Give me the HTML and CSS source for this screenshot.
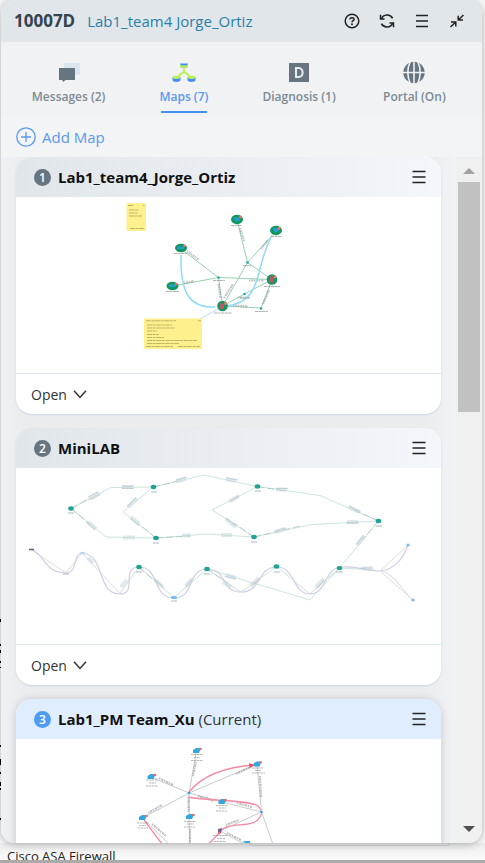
FILE: index.html
```html
<!DOCTYPE html>
<html lang="en">
<head>
<meta charset="utf-8">
<meta name="viewport" content="width=device-width, initial-scale=1">
<title>10007D - Maps</title>
<link rel="stylesheet" href="styles.css">
</head>
<body>
<svg class="backdrop" width="2" height="240" viewBox="0 0 2 240" aria-hidden="true">
  <path d="M0 9h1v3H0zM0 34h1v2H0zM0 40h1v3H0zM0 51h1v2H0zM0 57h1v1H0zM0 135h1v2H0zM0 149h1v6H0zM0 162h1v2H0zM0 172h1v4H0zM0 178h1v2H0zM0 208h1v2H0z"/>
</svg>
<main class="panel">
  <header class="topbar">
    <h1>10007D</h1>
    <a class="topic" href="#">Lab1_team4 Jorge_Ortiz</a>
    <div class="tools">
      <button type="button" aria-label="Help">
        <svg width="16" height="16" viewBox="0 0 16 16"><circle cx="8" cy="8" r="6.8" fill="none" stroke="#222" stroke-width="1.5"/><path d="M5.9 6.4C6 4.2 10 4.100 10.100 6.300C10.100 7.700 8 7.700 8 9.300" fill="none" stroke="#222" stroke-width="1.500"/><circle cx="8" cy="11.300" r="1" fill="#222"/></svg>
      </button>
      <button type="button" aria-label="Refresh">
        <svg width="16" height="16" viewBox="0 0 16 16" fill="none" stroke="#222" stroke-width="1.600"><path d="M2.300 6A6.200 6.200 0 0 1 13.600 5.300M13.700 10A6.200 6.200 0 0 1 2.400 10.700"/><path d="M1.500 1.800V6H5.500M14.500 14.200V10H10.500" stroke-width="1.500"/></svg>
      </button>
      <button type="button" aria-label="Menu">
        <svg width="16" height="16" viewBox="0 0 16 16" stroke="#222" stroke-width="1.500"><path d="M2 2.500h12M2 8h12M2 13.500h12"/></svg>
      </button>
      <button type="button" aria-label="Collapse">
        <svg width="16" height="16" viewBox="0 0 16 16" fill="none" stroke="#222" stroke-width="1.500"><path d="M14.500 2L9 7.200M9.200 2.800V7H14M1.500 14L7 8.800M2 9H6.800V13.500"/></svg>
      </button>
    </div>
  </header>

  <nav class="tabs">
    <a class="tab" href="#">
      <svg width="24" height="24" viewBox="0 0 24 24"><path d="M7 3h16v12H7z" fill="#dce6ef"/><path d="M2 8h16v12H8.500L6.500 22L5 20H2z" fill="#66757f"/></svg>
      <span>Messages (2)</span>
    </a>
    <a class="tab active" href="#" aria-current="page">
      <svg width="24" height="24" viewBox="0 0 24 24"><path d="M12 5v6.500L5.500 17M12 11.500L18.500 17" fill="none" stroke="#b8ef55" stroke-width="1.800"/><path d="M8 3.500h8V6c0 2.500-8 2.500-8 0zM.5 17h8v3c0 2.500-8 2.500-8 0zM15.500 17h8v3c0 2.500-8 2.500-8 0z" fill="#468ff0"/><path d="M8 4v2c0 2.500 8 2.500 8 0V4c-1 2-7 2-8 0z" fill="#b8ef55"/><ellipse cx="4.500" cy="17.300" rx="4" ry="1.600" fill="#b8ef55"/><ellipse cx="19.500" cy="17.300" rx="4" ry="1.600" fill="#b8ef55"/></svg>
      <span>Maps (7)</span>
    </a>
    <a class="tab" href="#">
      <svg width="24" height="24" viewBox="0 0 24 24"><path d="M2 3h20v19H2z" fill="#66757f"/><path d="M9 8v9h2.500c5.500 0 5.500-9 0-9z" fill="none" stroke="#e8edf0" stroke-width="2"/></svg>
      <span>Diagnosis (1)</span>
    </a>
    <a class="tab" href="#">
      <svg width="24" height="24" viewBox="0 0 24 24"><circle cx="12" cy="12.500" r="10.700" fill="#66757f"/><path d="M12 1.500v22M1 12.500h22M8.300 1.500C5 8 5 17 8.300 23.500M15.700 1.500C19 8 19 17 15.700 23.500" fill="none" stroke="#f1f3f5" stroke-width="1.600"/></svg>
      <span>Portal (On)</span>
    </a>
  </nav>

  <button type="button" class="add">
    <svg width="20" height="20" viewBox="0 0 20 20" fill="none" stroke="#5a98f0" stroke-width="1.300"><circle cx="10" cy="10" r="9.200"/><path d="M10 5v10M5 10h10"/></svg>
    Add Map
  </button>

  <div class="body">
    <div class="list">
      <article class="card">
        <header class="card-head">
          <span class="num">1</span>
          <h2>Lab1_team4_Jorge_Ortiz</h2>
          <button type="button" class="more" aria-label="Map menu"><svg width="14" height="14" viewBox="0 0 14 14" stroke="#222" stroke-width="1.500"><path d="M.5 1.500h13M.5 7h13M.5 12.500h13"/></svg></button>
        </header>
        <svg class="thumb" viewBox="16 197 425 176" role="img" aria-label="Network map">
          <g fill="#fdf08d"><path d="M126.500 203h19.500v28h-19.500zM144 318.500h58V349h-58z"/></g>
          <g fill="none" stroke="#6d6838" stroke-width=".8" stroke-dasharray="5 .5 3 .6" opacity=".55">
            <path d="M128 205.500h5M143 205.500h1.500M129 210h10M129 213h9M129 216h13M130 228.500h14" />
            <path d="M146 320.800h30M198 320.800h3M147 325h25M147 328h28M147 331h10M147 334.500h12M147 337.500h17M147 340.500h50M147 343.500h32M146 346.500h27M178 346.500h22"/>
          </g>
          <path d="M201 318.500L218 309" stroke="#bcdcf7" fill="none"/>
          <g fill="none" stroke="#98d1b2" stroke-width="1">
            <path d="M237 220L247.500 262.500L276 231M247.500 262.500L272 279.500M247.500 262.500L222.500 306M181 249L218.500 277.500L272 279.500M218.500 277.500L173 286M218.500 277.500L222.500 306L244.500 294L272 279.500M222.500 306L261 308L272 280"/>
          </g>
          <g fill="none" stroke="#858c88" stroke-width="2.200" stroke-dasharray="1.500 .8 2 .6" opacity=".5">
            <path d="M240 228l4 13M261 249l7-9M187 251l12 9M184 283l10-2M218.500 284l2 14M224 298l9-14M249 280.500h15M233 305.500l15 1M263 304l6-14M238 297.500h11"/>
          </g>
          <path d="M181 255C180 294 190 308 215 307M271 238C254 268 264 302 226 306" fill="none" stroke="#90daf8" stroke-width="1.500"/>
          <g fill="#2aa5a8"><circle cx="247.500" cy="262.500" r="1.300"/><circle cx="218.500" cy="277.500" r="1.300"/><circle cx="244.500" cy="294" r="1.300"/><circle cx="261" cy="308.500" r="1.300"/></g>
          <g fill="#12985c">
            <ellipse cx="237" cy="219.500" rx="6" ry="4.700"/><ellipse cx="276" cy="230.500" rx="6" ry="4.700"/><ellipse cx="181" cy="248" rx="6" ry="4.200"/><ellipse cx="172.500" cy="286" rx="6" ry="4.200"/><circle cx="272" cy="279.500" r="5.300"/><circle cx="222.500" cy="306" r="5.300"/>
          </g>
          <g fill="#269dd4"><path d="M233.500 217.500h6v3.500l-4 .5zM272.500 228h6l1 3-5 1.500zM177.500 246.500h6.500v2.500h-7zM169 284.500h6.500v2.500H169z"/></g>
          <g fill="#b9576a"><path d="M270 276l4 1-1 6-4-1zM220.500 303l4 1-1 5.500-4-1z"/></g>
          <g fill="#f0776e"><circle cx="240.500" cy="217" r="1.400"/><circle cx="279" cy="228.500" r="1.400"/><circle cx="184.500" cy="246" r="1.300"/><circle cx="176" cy="284" r="1.300"/><circle cx="275" cy="277" r="1.400"/><circle cx="225.500" cy="303.500" r="1.400"/></g>
          <path d="M231 225.500h11M271 236.500h11M174 253.500h13M166 291.500h13M264 286.500h16M214 313h18M243 265.500h8M213 280.500h12M240 298h10M255 311.500h13" stroke="#555" stroke-width="1" stroke-dasharray="3 .5" opacity=".45"/>
        </svg>
        <footer class="card-foot"><button type="button" class="open">Open <svg width="14" height="9" viewBox="0 0 14 9" fill="none" stroke="#333" stroke-width="1.500"><path d="M1 .8L7 7.500L13 .8"/></svg></button></footer>
      </article>

      <article class="card">
        <header class="card-head">
          <span class="num">2</span>
          <h2>MiniLAB</h2>
          <button type="button" class="more" aria-label="Map menu"><svg width="14" height="14" viewBox="0 0 14 14" stroke="#222" stroke-width="1.500"><path d="M.5 1.500h13M.5 7h13M.5 12.500h13"/></svg></button>
        </header>
        <svg class="thumb" viewBox="16 468 425 176" role="img" aria-label="Network map">
          <g fill="none" stroke="#cde5da" stroke-width="1">
            <path d="M71 508.500L111 487.500L153.500 487L204 475L257.500 486.500L320 495.500L378.500 521L312 524.500L254 537L206 534L156 538L106 537L71 508.500M153.500 487L123 512L156 538M257.500 486.500L212 510L254 537M378.500 521L339.500 568L310 600L207 569M120 593.500L139 567L174 597.500L207 569L241 592L276.500 566.500L310 594L339.500 568L374 570"/>
          </g>
          <g fill="none" stroke="#a3bdb2" stroke-width="1" stroke-dasharray="7 3" opacity=".7"><path d="M71 508.500L90 498M71 508.500L90 524M153.500 487L178 481M257.500 486.500L285 491M254 537L300 526M378.500 521L352 509M156 538L190 536M378.500 521L362 540M156 538L138 523M254 537L234 523M139 567L158 584M207 569L228 583"/></g>
          <g fill="none" stroke="#e1dce1"><path d="M31 549.500L66 573L82 553L120 593.500M380 571L408 545M380 571L413 600"/></g>
          <g fill="none" stroke="#d0cde6" stroke-width="1.200">
            <path d="M31 549C46 555 44 573 66 573C78 573 73 553 82 553C106 555 96 594 120 594C138 594 120 567 139 567C160 567 152 598 174 598C195 598 187 569 207 569C228 569 220 592 241 592C262 592 257 567 276.500 567C296 567 292 594 310 594C327 594 324 567 342 567C359 566 365 571 380 571C395 570 404 557 408 545"/>
            <path d="M380 571C396 574 401 590 413 600" stroke="#e6e2ec"/>
          </g>
          <g fill="none" stroke="#c9d9dd" stroke-width="4" opacity=".6">
            <path d="M90 498l9-5M122 487h11M176 481.500l10-3M88 522l8 7M128 507l9-9M131 517l8 7M123 537.500h12M226 479l10 2M230 501l9-5M226 519l10 8M182 535.500h9M221 535h11M276 489.500h11M349 507l10 5M276 532l9-3M347 522h11M357 545l7-9M88 558l5 5M121 587l6-7M155 580l8 7M186 586l6-7M226 575l10 3M223 582l8 5M251 585l8-7M316 587l8-8M362 568.500h11"/>
          </g>
          <g fill="none" stroke="#9eb6c0" stroke-width="1" opacity=".5">
            <path d="M88 497l10-5M90 500l10-5M122 486h12M122 488.500h12M176 480l11-3M86 522l9 8M127 507l9-9M131 519l8 7M226 478l12 2M229 502l10-6M226 518l10 8M276 488.500h12M349 506l12 6M274 531l12-3M346 523h13M356 545l8-10M155 579l9 9M185 588l8-10M224 576l12 3M251 587l9-9M316 589l8-9M360 568h12"/>
          </g>
          <g fill="#22a294"><ellipse cx="71" cy="508.500" rx="2.800" ry="2.200"/><ellipse cx="153.500" cy="487" rx="2.800" ry="2.200"/><ellipse cx="156" cy="538" rx="2.800" ry="2.200"/><ellipse cx="257.500" cy="486.500" rx="2.800" ry="2.200"/><ellipse cx="254" cy="537" rx="2.800" ry="2.200"/><ellipse cx="378.500" cy="521" rx="2.800" ry="2.200"/><ellipse cx="139" cy="567" rx="2.800" ry="2.200"/><ellipse cx="207" cy="569" rx="2.800" ry="2.200"/><ellipse cx="276.500" cy="566.500" rx="2.800" ry="2.200"/><ellipse cx="339.500" cy="568" rx="2.800" ry="2"/></g>
          <g fill="#7abcf0"><ellipse cx="174" cy="597.500" rx="3" ry="1.700"/><circle cx="408" cy="545" r="1.600"/><circle cx="413" cy="600" r="1.600"/></g>
          <ellipse cx="82.500" cy="553" rx="2.500" ry="1.200" fill="#b5d9f5"/>
          <path d="M29 549.500h5" stroke="#5c6089" stroke-width="1.500"/>
          <path d="M68 513h6M151 492h6M153 543h6M255 491h6M251 542h6M376 526h6M136 572h6M204 574h6M274 572h6M336 572h7M171 601h6M63 574h6" stroke="#a4b5c4" stroke-width="1.500" opacity=".6"/>
        </svg>
        <footer class="card-foot"><button type="button" class="open">Open <svg width="14" height="9" viewBox="0 0 14 9" fill="none" stroke="#333" stroke-width="1.500"><path d="M1 .8L7 7.500L13 .8"/></svg></button></footer>
      </article>

      <article class="card current">
        <header class="card-head">
          <span class="num">3</span>
          <h2>Lab1_PM Team_Xu <span>(Current)</span></h2>
          <button type="button" class="more" aria-label="Map menu"><svg width="14" height="14" viewBox="0 0 14 14" stroke="#222" stroke-width="1.500"><path d="M.5 1.500h13M.5 7h13M.5 12.500h13"/></svg></button>
        </header>
        <svg class="thumb" viewBox="16 739 425 176" role="img" aria-label="Network map">
          <g fill="none" stroke="#bbb" stroke-width=".8">
            <path d="M196.500 751L189 793L151 777M189 793L142.500 818L175 850M189 793L189.500 850M189 793L257 764L261.500 812L222 802L189 793M261.500 812L220 831L246 845M261.500 812L275 850"/>
          </g>
          <g fill="none" stroke="#8b8b8b" stroke-width="2" stroke-dasharray="1.500 .8 2.500 .7" opacity=".55">
            <path d="M196 762l-3 14M159 778l14 7M148 813l14-8M236 774l15-7M260 776l1 22M188.500 798v14M190 829v14M198 796l16 5M237 803l15 4M226 825l13-5M227 833l14 7M152 824l14 12"/>
          </g>
          <path d="M189 792C202 776 223 767 255 765M188 797C207 801 251 800 258 806C263 811 262 814 260 817C253 830 228 820 220 832L207 846M144 820L165 848" fill="none" stroke="#f48aa3" stroke-width="1.300"/>
          <path d="M249 763l5 2-4 3z" fill="#ed405a"/>
          <g fill="#32a8df"><path d="M193 750l3-2h5l-2 5h-6zM253.500 763.500l3-2h5l-2 5h-6zM147.500 776l3-2h5l-2 5h-6zM139 817l3-2h5l-2 5h-6zM186 816l3-2h5l-2 5h-6zM218.500 801l3-2h5l-2 5h-6zM242 842l3-1h5v3z"/><circle cx="189" cy="793" r="1.300"/><circle cx="261.500" cy="812" r="1.300"/></g>
          <path d="M218 829l4-1-1 5-3 1z" fill="#7b5c8c"/>
          <g fill="#ef6970"><circle cx="200.500" cy="749" r="1.300"/><circle cx="260.500" cy="762.500" r="1.300"/><circle cx="155" cy="775" r="1.300"/><circle cx="146.500" cy="816" r="1.300"/><circle cx="193.500" cy="815" r="1.300"/><circle cx="225.500" cy="800" r="1.300"/><circle cx="219" cy="833" r="1.300"/></g>
          <path d="M191 754.500h12M194 757.500h6M191 760.500h12M252 768h11M255 770.500h6M252 773h13M146 780h12M149 783h7M146 786h12M137 823h12M139 825.500h7M138 828h10M184 821.500h12M187 824h7M184 827h11M216 805.500h12M219 808h7M216 811h11M213 835.500h15M217 838.500h8M214 841.500h12" stroke="#777" stroke-width="1.200" stroke-dasharray="2.500 .5" opacity=".5"/>
        </svg>
        <footer class="card-foot"><button type="button" class="open">Open <svg width="14" height="9" viewBox="0 0 14 9" fill="none" stroke="#333" stroke-width="1.500"><path d="M1 .8L7 7.500L13 .8"/></svg></button></footer>
      </article>
    </div>
    <div class="scrollbar" aria-hidden="true">
      <svg width="12" height="6" viewBox="0 0 12 6"><path d="M0 6L6 0l6 6z" fill="#a2a2a2"/></svg>
      <div class="thumb-bar"></div>
      <svg width="12" height="6" viewBox="0 0 12 6"><path d="M0 0h12L6 6z" fill="#505050"/></svg>
    </div>
  </div>
</main>
<footer class="under"><span>Cisco ASA Firewall</span><div class="edge"></div></footer>
</body>
</html>
```

FILE: styles.css
```css
* {
  box-sizing: border-box;
}

body {
  display: flex;
  flex-direction: column;
  height: 100vh;
  margin: 0;
  overflow: hidden;
  background: #f8f8f8;
  color: #222;
  font-family: "Open Sans", "Noto Sans", sans-serif;
  font-size: 14px;
}

button {
  display: flex;
  align-items: center;
  padding: 0;
  border: 0;
  background: none;
  color: inherit;
  font: inherit;
  cursor: pointer;
}

a {
  text-decoration: none;
}

h1,
h2 {
  margin: 0;
}

.backdrop {
  position: absolute;
  left: 0;
  top: 610px;
}

.panel {
  position: relative;
  display: flex;
  flex: 1;
  flex-direction: column;
  min-height: 0;
  margin: 0 3px 0 1px;
  overflow: hidden;
  border-radius: 14px;
  background: #f3f4f6;
  box-shadow: 0 1px 8px rgba(0, 0, 0, 0.3);
}

.topbar {
  display: flex;
  flex: none;
  align-items: center;
  height: 42px;
  padding: 0 17px 0 13px;
  background: #e1e6ea;
}

.topbar h1 {
  color: #34434e;
  font-size: 17px;
  line-height: 24px;
}

.topic {
  margin-left: 12px;
  color: #2a7fa9;
  font-size: 15px;
  line-height: 24px;
}

.tools {
  display: flex;
  gap: 19px;
  margin-left: auto;
}

.tabs {
  display: grid;
  flex: none;
  grid-template-columns: repeat(4, 1fr);
  height: 75px;
  padding: 0 10px;
  background: #f1f2f4;
}

.tab {
  display: flex;
  flex-direction: column;
  align-items: center;
  padding-top: 18px;
  color: #7b8a93;
  font-size: 12px;
  font-weight: 600;
  line-height: 20px;
}

.tab span {
  padding-top: 3px;
}

.tab.active {
  color: #5a98f0;
}

.tab.active::after {
  width: 46px;
  height: 2px;
  margin-top: 4px;
  background: #468ff0;
  content: "";
}

.add {
  flex: none;
  gap: 6px;
  height: 40px;
  padding-left: 15px;
  color: #5a98f0;
  font-size: 15px;
}

.body {
  display: flex;
  flex: 1;
  min-height: 0;
  background: linear-gradient(90deg, #f0f1f4, #ebecee 5%, #ebecee 88%, #f1f3f7 95%);
}

.list {
  display: flex;
  flex: 1;
  flex-direction: column;
  gap: 14px;
  padding: 0 15px;
  overflow: hidden;
}

.card {
  flex: none;
  overflow: hidden;
  border-radius: 16px;
  background: #fff;
  box-shadow: 0 1px 2px #ccd5e2;
}

.card.current {
  box-shadow: 0 1px 10px rgba(0, 0, 0, 0.16);
}

.card-head {
  display: flex;
  align-items: center;
  height: 40px;
  padding: 0 15px 0 18px;
  background: linear-gradient(90deg, #e1e6eb, #f3f6fa);
}

.current .card-head {
  background: #e0edfe;
}

.num {
  width: 17px;
  height: 17px;
  border-radius: 50%;
  background: #66757f;
  color: #fff;
  font-size: 12px;
  font-weight: 600;
  line-height: 17px;
  text-align: center;
}

.current .num {
  background: #4d9bf5;
}

.card-head h2 {
  margin-left: 7px;
  color: #111;
  font-size: 15px;
  font-weight: 700;
}

.card-head h2 span {
  color: #333;
  font-weight: 400;
}

.more {
  margin-left: auto;
}

.thumb {
  display: block;
  width: 100%;
  height: 176px;
}

.card-foot {
  display: flex;
  height: 41px;
  padding-left: 15px;
  border-top: 1px solid #dde4ea;
}

.open {
  gap: 6px;
  color: #333;
}

.scrollbar {
  display: flex;
  flex-direction: column;
  align-items: center;
  width: 26px;
  padding: 11px 2px;
  background: #f0f0f0;
}

.thumb-bar {
  width: 100%;
  height: 230px;
  margin: 8px 0 auto;
  background: #c1c1c1;
}

.under {
  display: flex;
  flex: none;
  height: 20px;
  padding: 4px 35px 0 7px;
  overflow: hidden;
  border-bottom: 3px solid #aaa;
  background: linear-gradient(#eee, #fafafa);
  color: #222;
  font-size: 13px;
  line-height: 18px;
}

.edge {
  width: 200px;
  height: 3px;
  margin: -4px 0 0 auto;
  border: 1px solid #cfd6da;
  border-top: 0;
  border-radius: 0 0 4px 4px;
}
```
